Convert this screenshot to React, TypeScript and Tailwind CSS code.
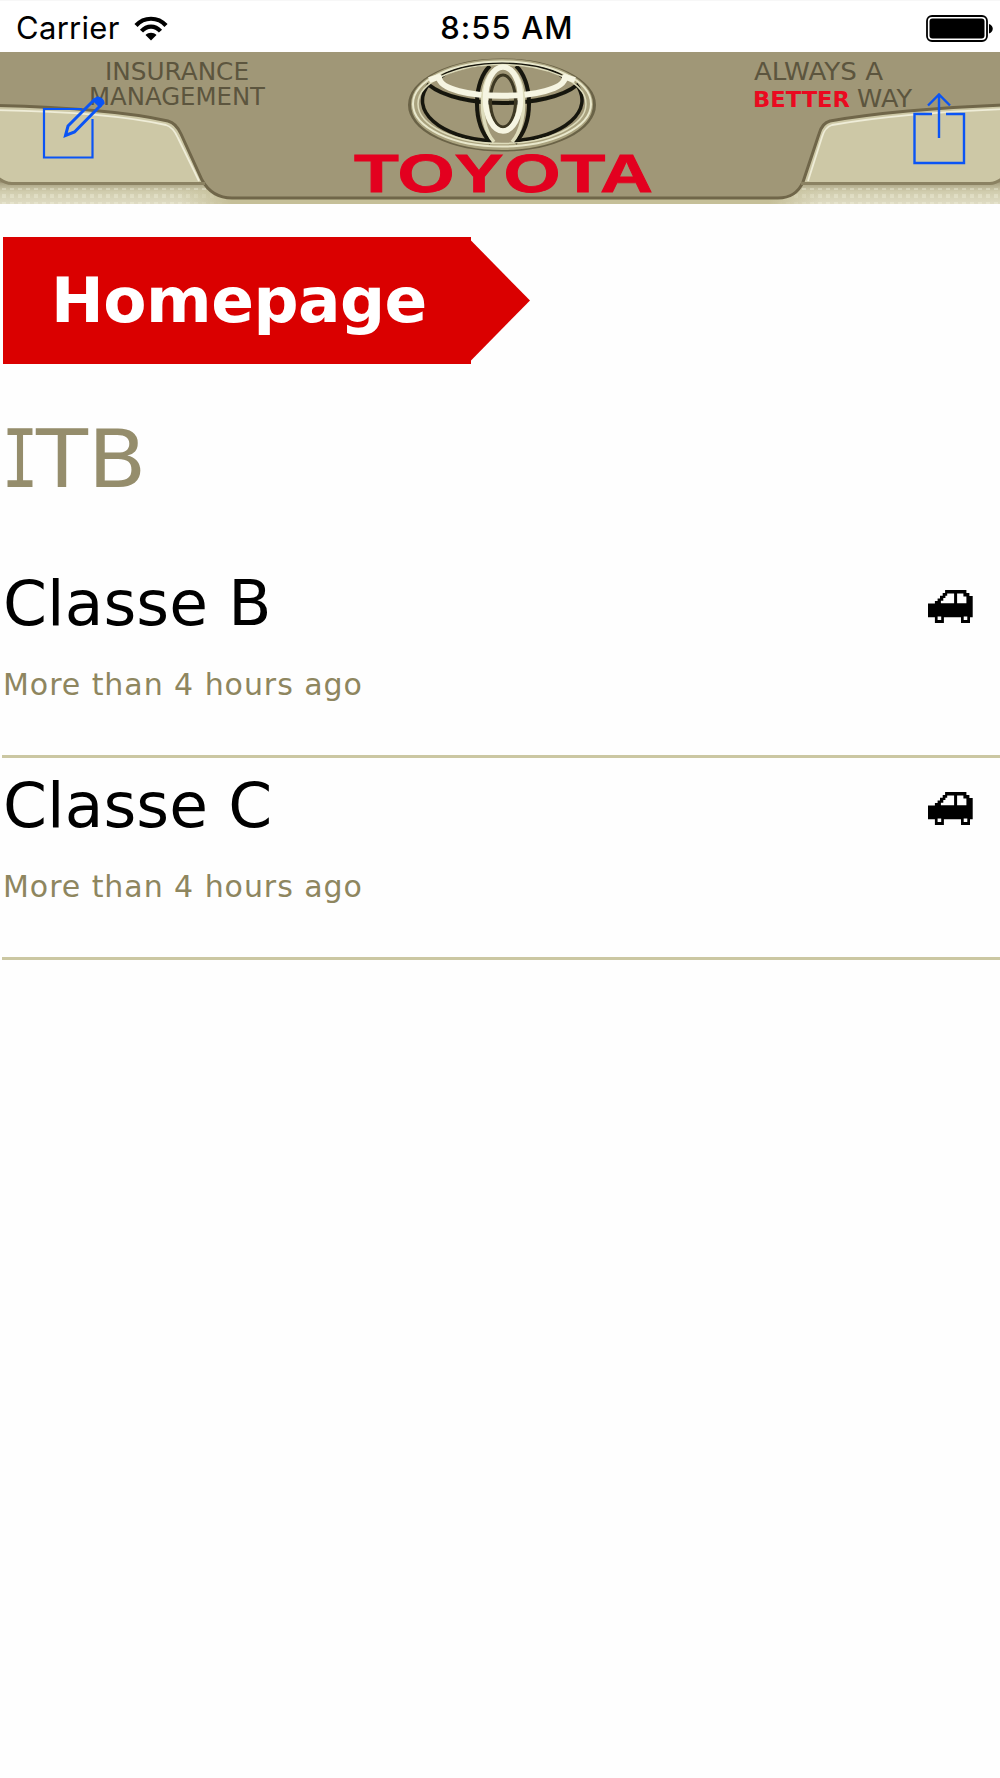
const vehicles = [
  { name: "Classe B", seen: "More than 4 hours ago" },
  { name: "Classe C", seen: "More than 4 hours ago" },
];

export default function App() {
  return (
    <div className="min-h-[1778px] w-[1000px] overflow-hidden bg-[#fefefe] font-['DejaVu_Sans',sans-serif]">
      <StatusBar />
      <header className="relative h-[152px]">
        <Banner />
        <button aria-label="Edit" className="absolute left-[42px] top-[42px]">
          <EditIcon />
        </button>
        <button aria-label="Share" className="absolute left-[912px] top-[40px]">
          <ShareIcon />
        </button>
      </header>

      <main className="pt-[33px]">
        <nav className="ml-[3px] flex h-[127px]">
          <a className="flex w-[468px] items-center bg-[#da0000] pl-[48px] text-[63px] font-bold leading-none tracking-[-0.5px] text-white">
            Homepage
          </a>
          <svg width="59" height="127" viewBox="0 0 59 127">
            <path d="M0 3.500 59 63.500 0 123.500z" fill="#da0000" />
          </svg>
        </nav>

        <h1 className="mt-[49px] flex h-[92px] items-center text-[81px] leading-none text-[#958d6c]">
          <span className="w-[36px] origin-left scale-x-[0.76] pl-[2px] font-['DejaVu_Sans_Mono',monospace]">I</span>
          <span className="origin-left scale-x-[1.05]">TB</span>
        </h1>

        <ul className="mt-[51px]">
          {vehicles.map((v) => (
            <li key={v.name} className="ml-[2px] h-[202px] border-b-[3px] border-[#cbc7a2] pt-[5px]">
              <div className="flex items-center justify-between pl-[1px] pr-[27px]">
                <span className="text-[63px] leading-[86px] tracking-[0.1px] text-black">{v.name}</span>
                <CarIcon />
              </div>
              <p className="mt-[18px] pl-[1px] text-[30px] leading-[40px] tracking-[0.95px] text-[#8e865f]">{v.seen}</p>
            </li>
          ))}
        </ul>
      </main>
    </div>
  );
}

function StatusBar() {
  return (
    <div className="grid h-[52px] grid-cols-3 items-center border-t border-[#f7f7f7] bg-white pl-4 pr-[7px] pt-[3px] font-['Inter',sans-serif] text-[31px] text-black">
      <div className="flex items-center gap-[14px]">
        <span className="tracking-[0.3px]">Carrier</span>
        <svg width="34" height="25" viewBox="0 0 34 25" fill="none" stroke="#000" strokeWidth="4.200">
          <path d="M2 9.500C10 .5 24 .5 32 9.500" />
          <path d="M7.500 15.200C13 9 21 9 26.500 15.200" />
          <path d="M17 24.500 11.500 19C14.500 16 19.500 16 22.500 19z" fill="#000" stroke="none" />
        </svg>
      </div>
      <span className="pl-[5px] text-center font-medium tracking-[1.1px]">8:55 AM</span>
      <svg className="justify-self-end" width="67" height="27" viewBox="0 0 67 27">
        <rect x="1" y="1" width="60" height="25" rx="5" fill="none" stroke="#000" strokeWidth="1.800" />
        <rect x="3.500" y="3.500" width="55" height="20" rx="3" />
        <path d="M63 9c5 1.500 5 8 0 9.500z" />
      </svg>
    </div>
  );
}

function Banner() {
  return (
    <svg className="block" width="1000" height="152" viewBox="0 52 1000 152">
      <defs>
        <linearGradient id="shade" x1="0" y1="0" x2="0" y2="1">
          <stop offset="0" stopColor="#aaa383" />
          <stop offset="0.4" stopColor="#d0ccad" />
          <stop offset="1" stopColor="#dfdcc4" />
        </linearGradient>
        <linearGradient id="fold">
          <stop offset="0" stopColor="#c5bf98" stopOpacity="0" />
          <stop offset="0.08" stopColor="#c5bf98" />
          <stop offset="0.92" stopColor="#c5bf98" />
          <stop offset="1" stopColor="#c5bf98" stopOpacity="0" />
        </linearGradient>
        <pattern id="dots" width="8" height="8" patternUnits="userSpaceOnUse">
          <rect x="2" y="2" width="4" height="4" fill="#f4f2df" opacity="0.350" />
        </pattern>
        <filter id="soft">
          <feGaussianBlur stdDeviation="0.7" />
        </filter>
      </defs>
      <rect y="52" width="1000" height="152" fill="#a09777" />
      <rect y="183" width="1000" height="21" fill="url(#shade)" />
      <rect y="188" width="1000" height="16" fill="url(#dots)" />
      <path d="M180 190H820V204H180z" fill="url(#fold)" />
      <path d="M190 176 203 182Q214 198 232 198H778Q796 198 803 182L815 176V150H190z" fill="#a09777" />

      <path d="M0 106Q110 108 168 121Q176 123 181 134L202 182H12Q4 182 0 178z" fill="#cdc8a6" />
      <path d="M1000 105Q900 109 830 121Q822 123 819 134L804 182H990Q997 182 1000 179z" fill="#cdc8a6" />
      <g fill="none" filter="url(#soft)">
        <path d="M-5 110Q110 112 166 125Q173 127 178 138L199 181" stroke="#efedd8" strokeWidth="1.800" />
        <path d="M-5 105.500Q110 108 168 121Q176 123 181 134L202 180Q212 198 232 198H778Q796 198 803 182" stroke="#6f6649" strokeWidth="3" />
        <path d="M-4 176Q4 183.500 12 183.500H205" stroke="#8b8262" strokeWidth="3" />
        <path d="M1005 109Q900 113 832 125Q825 127 822 137L808 181" stroke="#efedd8" strokeWidth="1.800" />
        <path d="M1005 105Q900 109 830 121Q822 123 819 134L803 182" stroke="#6f6649" strokeWidth="3" />
        <path d="M1004 177Q996 183.500 990 183.500H801" stroke="#8b8262" strokeWidth="3" />
      </g>

      <g fill="#5c553e" fontSize="24.500" fontFamily="DejaVu Sans, sans-serif">
        <text x="105" y="80" textLength="144" lengthAdjust="spacingAndGlyphs">INSURANCE</text>
        <text x="89" y="105" textLength="176" lengthAdjust="spacingAndGlyphs">MANAGEMENT</text>
        <text x="754" y="80" textLength="129" lengthAdjust="spacingAndGlyphs">ALWAYS A</text>
        <text x="753" y="107" textLength="97" lengthAdjust="spacingAndGlyphs" fill="#ea0a20" fontWeight="bold" fontSize="22">BETTER</text>
        <text x="857" y="107" textLength="55" lengthAdjust="spacingAndGlyphs">WAY</text>
      </g>

      <Emblem />
      <text x="354" y="192" textLength="299" lengthAdjust="spacingAndGlyphs" fill="#e3001f" stroke="#e3001f" strokeWidth="0.800" fontSize="53" fontWeight="bold" fontFamily="Liberation Sans, sans-serif">
        TOYOTA
      </text>
    </svg>
  );
}

// Chrome rings: a dark pass underneath, the bright metal on top
function Emblem() {
  return (
    <g fill="none" filter="url(#soft)">
      <ellipse cx="502" cy="105" rx="92" ry="44.500" stroke="#6b6347" strokeWidth="4" />
      <ellipse cx="502" cy="104.500" rx="88" ry="42.500" stroke="#aaa37f" strokeWidth="6" />
      <path d="M441 77C463 59 541 59 563 77" stroke="#17150c" strokeWidth="3" />
      <path d="M429 84C408 110 440 138 492 141M576 84C596 110 564 138 512 141" stroke="#17150c" strokeWidth="3.500" />
      <path d="M429 85C458 109 548 109 577 85" stroke="#17150c" strokeWidth="4" />
      <path d="M491 143C471 122 474 80 490 66M515 143C535 122 532 80 516 66" stroke="#17150c" strokeWidth="4" />
      <ellipse cx="503" cy="101" rx="12.500" ry="26" stroke="#3c3724" strokeWidth="3" />
      <ellipse cx="502" cy="104" rx="89" ry="42.500" stroke="#e9e8cc" strokeWidth="2" />
      <ellipse cx="502" cy="104" rx="84" ry="39.500" stroke="#dedcbb" strokeWidth="1.600" />
      <path d="M429 80L439 77C440 102 564 102 565 77L575 80" stroke="#f6f5e2" strokeWidth="6" strokeLinejoin="round" />
      <path d="M494 142C476 122 479 67 503 67C527 67 530 122 512 142" stroke="#dedcbb" strokeWidth="3.500" />
      <ellipse cx="503" cy="99" rx="17.500" ry="32" stroke="#f6f5e2" strokeWidth="5.500" />
    </g>
  );
}

function EditIcon() {
  return (
    <svg width="64" height="76" viewBox="42 94 64 76" fill="none" stroke="#0a54f5" strokeWidth="2.200">
      <path d="M82 109H44V157.500H92.500V119" />
      <path d="M65.500 135.500 68 126 94 100 100 106 74.500 132z" strokeWidth="3" />
      <path d="M94 100 97.500 97.500Q103 98.500 103.500 103L100.500 106z" fill="#0a54f5" />
    </svg>
  );
}

function ShareIcon() {
  return (
    <svg width="54" height="74" viewBox="912 92 54 74" fill="none" stroke="#0a54f5" strokeWidth="2.400">
      <path d="M932 114H914.500V163H964V114H946" />
      <path d="M939 138V95M928 105.500 939 94.500 950 105.500" />
    </svg>
  );
}

function CarIcon() {
  return (
    <svg className="relative top-[2px]" width="45" height="33" viewBox="0 0 15 11">
      <path d="M5.700 0H12.800V1H13.800V2H14.900V9.100H14V11H11V9.100H5.300V11H2.300V9.100H0V4.500H2.300V3.700H3.200V2.800H4V1.900H4.900V1H5.700z" />
      <path d="M6.400 1.200H8.700V4.400H4.300V3.600H5.100V2.700H5.800V1.900H6.400zM9.700 1.200H11.800V2.200H12.800V4.400H9.700zM3.200 8.800H4.400V10H3.200zM11.900 8.800H13.100V10H11.900z" fill="#fefefe" />
    </svg>
  );
}
